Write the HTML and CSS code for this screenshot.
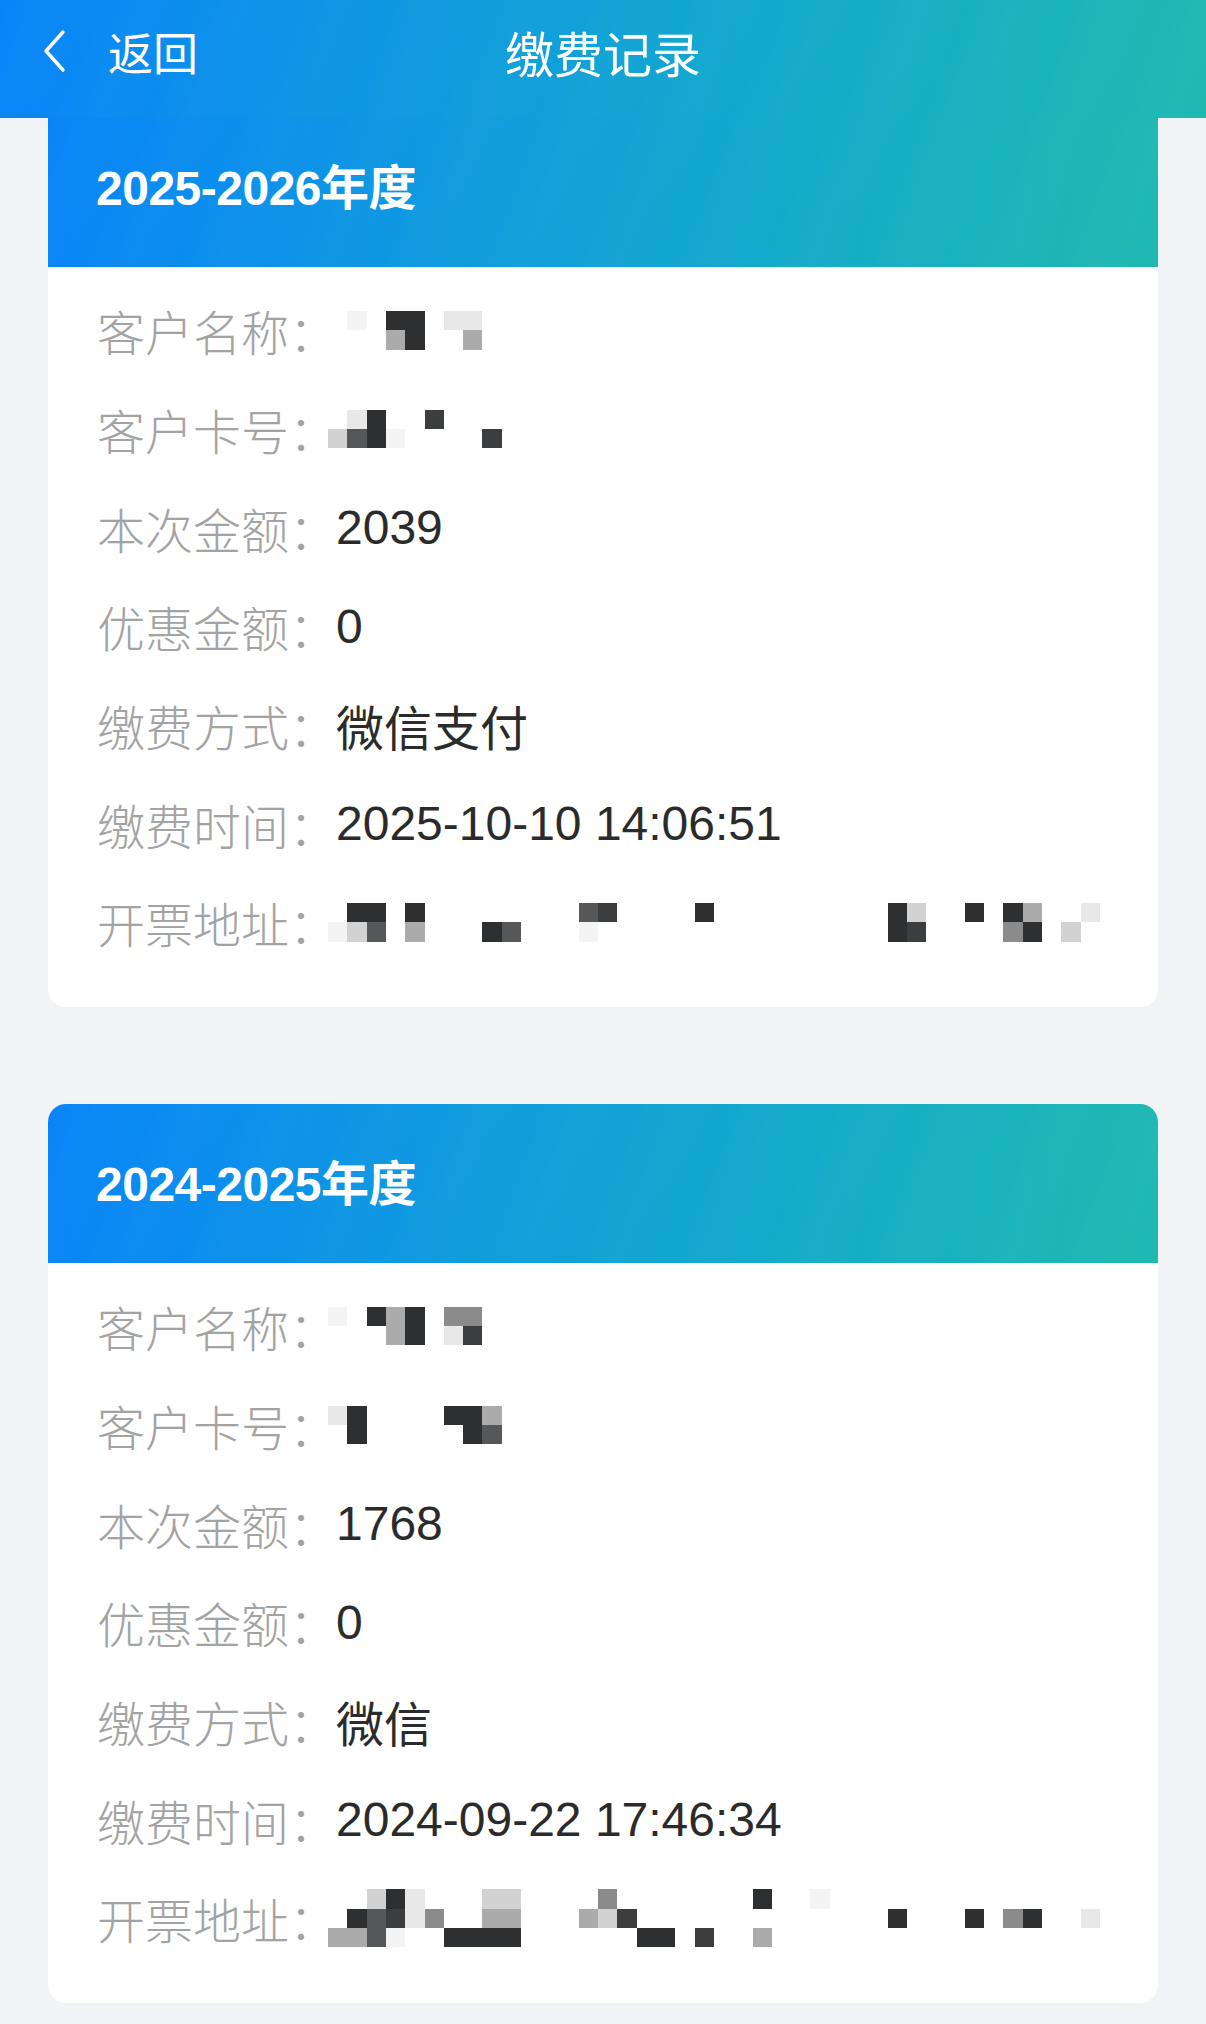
FILE: index.html
```html
<!DOCTYPE html>
<html lang="zh-CN">
<head>
    <meta charset="UTF-8">
    <meta name="viewport" content="width=device-width, initial-scale=1.0">
    <title>缴费记录</title>
    <link rel="stylesheet" href="styles.css">
</head>
<body>
    <header class="nav-bar">
        <div class="nav-back">
            <svg viewBox="0 0 24 44" fill="none" stroke="currentColor" stroke-width="3.4" stroke-linecap="round" stroke-linejoin="round">
                <polyline points="21 3 4 22 21 41"></polyline>
            </svg>
            <span>返回</span>
        </div>
        <div class="nav-title">缴费记录</div>
        <div></div>
    </header>

    <main class="record-list">
        <section class="record-card">
            <div class="record-head">2025-2026年度</div>
            <div class="record-body">
                <div class="record-row">
                    <span class="row-label">客户名称：</span>
                    <span class="mosaic" data-map=".a.hh.bb|...dh..d"></span>
                </div>
                <div class="record-row">
                    <span class="row-label">客户卡号：</span>
                    <span class="mosaic" data-map=".bh..g...|cfha....g"></span>
                </div>
                <div class="record-row">
                    <span class="row-label">本次金额：</span>
                    <span class="row-value">2039</span>
                </div>
                <div class="record-row">
                    <span class="row-label">优惠金额：</span>
                    <span class="row-value">0</span>
                </div>
                <div class="record-row">
                    <span class="row-label">缴费方式：</span>
                    <span class="row-value">微信支付</span>
                </div>
                <div class="record-row">
                    <span class="row-label">缴费时间：</span>
                    <span class="row-value">2025-10-10 14:06:51</span>
                </div>
                <div class="record-row">
                    <span class="row-label">开票地址：</span>
                    <span class="mosaic" data-map=".hh.h........fg....h.........hc..h.hd..b|acf.d...hf...a...............hg....eh.c."></span>
                </div>
            </div>
        </section>

        <section class="record-card">
            <div class="record-head">2024-2025年度</div>
            <div class="record-body">
                <div class="record-row">
                    <span class="row-label">客户名称：</span>
                    <span class="mosaic" data-map="a.hdh.ee|...dh.bg"></span>
                </div>
                <div class="record-row">
                    <span class="row-label">客户卡号：</span>
                    <span class="mosaic" data-map="bh....hhd|.h.....hf"></span>
                </div>
                <div class="record-row">
                    <span class="row-label">本次金额：</span>
                    <span class="row-value">1768</span>
                </div>
                <div class="record-row">
                    <span class="row-label">优惠金额：</span>
                    <span class="row-value">0</span>
                </div>
                <div class="record-row">
                    <span class="row-label">缴费方式：</span>
                    <span class="row-value">微信</span>
                </div>
                <div class="record-row">
                    <span class="row-label">缴费时间：</span>
                    <span class="row-value">2024-09-22 17:46:34</span>
                </div>
                <div class="record-row">
                    <span class="row-label">开票地址：</span>
                    <span class="mosaic" data-map="..chb...cc....e.......h..a..............|.hfgbe..dd...dcg.............h...h.eh..b|ddfa..hhhh......hh.g..d................."></span>
                </div>
            </div>
        </section>
    </main>

    <script>
        // Build the pixelated (redacted) blocks from their row maps
        document.querySelectorAll('.mosaic').forEach(function(block) {
            const rows = block.dataset.map.split('|');
            block.style.gridTemplateColumns = 'repeat(' + rows[0].length + ', 19.3px)';
            rows.forEach(function(row) {
                for (const ch of row) {
                    const cell = document.createElement('i');
                    if (ch !== '.') cell.className = 'px-' + ch;
                    block.appendChild(cell);
                }
            });
        });
    </script>
</body>
</html>
```

FILE: styles.css
```css
:root {
    --page-bg: #f2f3f7;
    --card-bg: #ffffff;
    --label-color: #a3a3a3;
    --value-color: #2b2b2b;
    --brand-gradient: linear-gradient(100deg, #0884f8 0%, #0f9ddc 40%, #13aacb 65%, #1eb9b0 100%);
    --streaks: repeating-linear-gradient(112deg, rgba(255, 255, 255, 0) 0px, rgba(255, 255, 255, 0.02) 45px, rgba(255, 255, 255, 0) 90px);
}

* {
    margin: 0;
    padding: 0;
    box-sizing: border-box;
}

body {
    background-color: var(--page-bg);
    font-family: "Liberation Sans", "Noto Sans CJK SC", sans-serif;
    color: var(--value-color);
    width: 1206px;
    min-height: 2024px;
    overflow: hidden;
}

.nav-bar {
    position: relative;
    z-index: 2;
    height: 118px;
    padding: 0 0 16px 42px;
    display: grid;
    grid-template-columns: 1fr auto 1fr;
    align-items: center;
    color: #ffffff;
    background-image: var(--streaks), var(--brand-gradient);
}

.nav-back {
    display: flex;
    align-items: center;
    gap: 42px;
    font-family: "Noto Sans CJK SC", sans-serif;
    font-size: 45px;
}

.nav-back svg {
    width: 24px;
    height: 44px;
}

.nav-title {
    font-family: "Noto Sans CJK SC", sans-serif;
    font-size: 49px;
    margin-left: -42px;
}

.record-list {
    margin-top: -10px;
    padding: 0 48px;
    display: flex;
    flex-direction: column;
    gap: 97px;
}

.record-card {
    background-color: var(--card-bg);
    border-radius: 18px;
    overflow: hidden;
}

/* first card is scrolled up under the nav bar */
.record-card:first-child {
    border-top-left-radius: 0;
    border-top-right-radius: 0;
}

.record-head {
    height: 159px;
    padding: 0 0 7px 48px;
    display: flex;
    align-items: center;
    color: #ffffff;
    font-size: 48px;
    font-weight: 700;
    letter-spacing: -0.5px;
    background-image: var(--streaks), var(--brand-gradient);
}

.record-body {
    padding: 14px 49px 35px;
}

.record-row {
    height: 98.7px;
    display: flex;
    align-items: center;
    font-size: 48px;
    white-space: nowrap;
}

.row-label {
    color: var(--label-color);
    font-family: "Noto Sans CJK SC", sans-serif;
    font-weight: 300;
}

.row-value {
    color: var(--value-color);
    margin-left: -1px;
}

.mosaic {
    display: inline-grid;
    grid-auto-rows: 19.3px;
    margin-left: -9px;
}

.mosaic i {
    display: block;
}

.mosaic .px-a { background-color: #f4f4f4; }
.mosaic .px-b { background-color: #e8e8e8; }
.mosaic .px-c { background-color: #d2d2d2; }
.mosaic .px-d { background-color: #ababab; }
.mosaic .px-e { background-color: #8b8b8b; }
.mosaic .px-f { background-color: #555759; }
.mosaic .px-g { background-color: #3b3d3f; }
.mosaic .px-h { background-color: #2d2f31; }
```
